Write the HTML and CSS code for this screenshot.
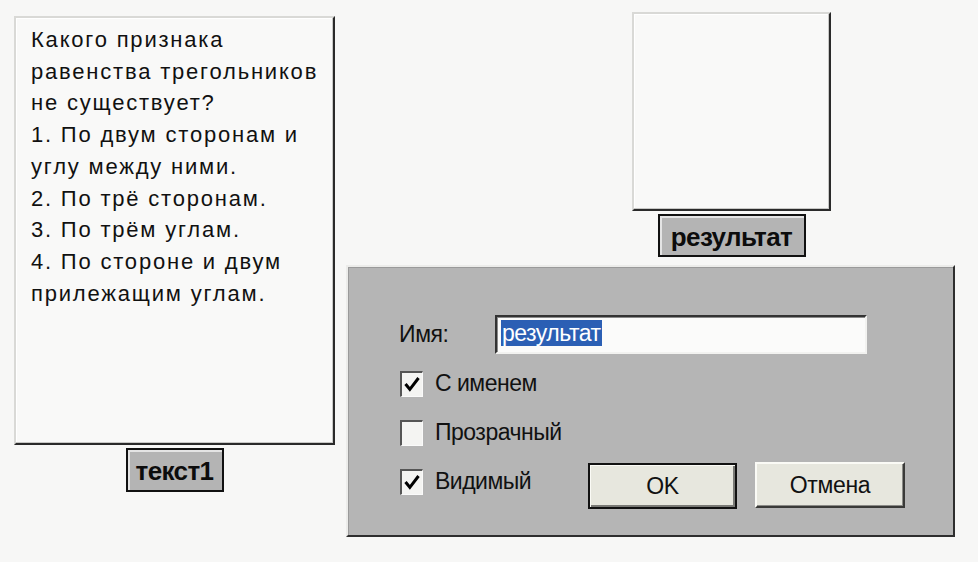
FILE: index.html
```html
<!DOCTYPE html>
<html lang="ru">
<head>
<meta charset="utf-8">
<title>Форма</title>
<link rel="stylesheet" href="styles.css">
</head>
<body>
<div class="page">
  <div class="left">
    <div class="memo">
      <p>Какого признака равенства трегольников не существует?</p>
      <p>1. По двум сторонам и углу между ними.</p>
      <p>2. По трё сторонам.</p>
      <p>3. По трём углам.</p>
      <p>4. По стороне и двум прилежащим углам.</p>
    </div>
    <div class="tag tag-text">текст1</div>
  </div>
  <div class="right">
    <div class="result-group">
      <div class="result-box"></div>
      <div class="tag tag-result">результат</div>
    </div>
    <div class="dialog">
      <div class="row-name">
        <span class="label">Имя:</span>
        <div class="input"><span class="sel">результат</span></div>
      </div>
      <div class="check-item ci-1">
        <span class="box"><svg viewBox="0 0 23 25" class="tick"><path d="M4 12 L9 18 L19 5" fill="none" stroke="#000" stroke-width="3.4"/></svg></span>
        <span class="clabel">С именем</span>
      </div>
      <div class="check-item ci-2">
        <span class="box"></span>
        <span class="clabel">Прозрачный</span>
      </div>
      <div class="row-last">
        <div class="check-item ci-3">
          <span class="box"><svg viewBox="0 0 23 25" class="tick"><path d="M4 12 L9 18 L19 5" fill="none" stroke="#000" stroke-width="3.4"/></svg></span>
          <span class="clabel">Видимый</span>
        </div>
        <div class="btn btn-ok">OK</div>
        <div class="btn btn-cancel">Отмена</div>
      </div>
    </div>
  </div>
</div>
</body>
</html>
```

FILE: styles.css
```css
html, body {
  margin: 0;
  padding: 0;
  background: #f7f7f6;
  width: 978px;
  height: 562px;
  overflow: hidden;
  font-family: "Liberation Sans", Arial, sans-serif;
  color: #111;
}
.page {
  display: flex;
  align-items: flex-start;
  padding: 12px 0 0 14px;
}
.left {
  margin-top: 4px;
  width: 321px;
  display: flex;
  flex-direction: column;
  align-items: center;
  gap: 3px;
}
.memo {
  box-sizing: border-box;
  width: 321px;
  height: 429px;
  background: #f9f9f8;
  border-top: 2px solid #d9d9d6;
  border-left: 2px solid #d9d9d6;
  border-right: 2px solid #2a2a2a;
  border-bottom: 2px solid #2a2a2a;
  box-shadow: inset -1px -1px 0 #c8c8c6, inset 1px 1px 0 #ffffff;
  padding: 6px 2px 0 15px;
  font-size: 22px;
  line-height: 31.7px;
  letter-spacing: 1.8px;
  color: #111;
}
.memo p { margin: 0; }
.tag {
  box-sizing: border-box;
  background: #b4b4b4;
  border: 2px solid #111;
  box-shadow: inset 2px 2px 0 #e4e4e4;
  font-weight: bold;
  font-size: 26px;
  letter-spacing: -0.6px;
  color: #0c0c0c;
  display: flex;
  align-items: center;
  justify-content: center;
  padding-top: 3px;
}
.tag-text { width: 98px; height: 44px; }
.tag-result { width: 148px; height: 43px; }
.right {
  margin-left: 11px;
  width: 609px;
  display: flex;
  flex-direction: column;
}
.result-group {
  margin-left: 286px;
  display: flex;
  flex-direction: column;
  align-items: center;
  align-self: flex-start;
  gap: 3px;
}
.result-box {
  box-sizing: border-box;
  width: 199px;
  height: 199px;
  background: #f9f9f8;
  border-top: 2px solid #d9d9d6;
  border-left: 2px solid #d9d9d6;
  border-right: 2px solid #2a2a2a;
  border-bottom: 2px solid #2a2a2a;
  box-shadow: inset -1px -1px 0 #c8c8c6, inset 1px 1px 0 #ffffff;
}
.dialog {
  box-sizing: border-box;
  margin-top: 8px;
  width: 609px;
  height: 272px;
  background: #b5b5b5;
  border-top: 2px solid #ececea;
  border-left: 2px solid #ececea;
  border-right: 2px solid #2e2e2e;
  border-bottom: 2px solid #2e2e2e;
  box-shadow: inset 1px 1px 0 #9a9a9a;
  padding: 48px 0 0 52px;
  font-size: 23px;
  color: #111;
}
.row-name {
  display: flex;
  align-items: center;
}
.label {
  width: 96px;
  margin-left: -1px;
  letter-spacing: -0.4px;
}
.input {
  box-sizing: border-box;
  width: 372px;
  height: 39px;
  background: #fbfbfa;
  border-top: 2px solid #333;
  border-left: 2px solid #333;
  border-right: 2px solid #f2f2f0;
  border-bottom: 2px solid #f2f2f0;
  box-shadow: inset 1px 1px 0 #8a8a8a;
  padding: 3px 0 0 4px;
}
.sel {
  display: inline-block;
  background: #2b5fb4;
  color: #fff;
  height: 26px;
  line-height: 27px;
  padding: 0 1px;
  letter-spacing: -0.5px;
}
.check-item {
  display: flex;
  align-items: center;
  gap: 12px;
}
.ci-1 { margin-top: 16px; }
.ci-2 { margin-top: 22px; }
.row-last {
  margin-top: 17px;
  display: flex;
  align-items: flex-start;
}
.ci-3 { margin-top: 5px; width: 188px; }
.box {
  box-sizing: border-box;
  width: 23px;
  height: 26px;
  background: #f4f4f2;
  border-top: 2px solid #555;
  border-left: 2px solid #555;
  border-right: 1px solid #fafafa;
  border-bottom: 1px solid #fafafa;
  display: flex;
  align-items: center;
  justify-content: center;
}
.tick { width: 21px; height: 23px; }
.clabel { letter-spacing: -0.5px; }
.btn {
  box-sizing: border-box;
  height: 46px;
  background: #e7e7de;
  display: flex;
  align-items: center;
  justify-content: center;
  font-size: 23px;
  letter-spacing: -0.3px;
  color: #111;
}
.btn-ok {
  width: 149px;
  border: 2px solid #111;
  box-shadow: inset 1px 1px 0 #fbfbf6, inset -2px -2px 0 #7a7a76;
}
.btn-cancel {
  width: 150px;
  margin-left: 18px;
  margin-top: -1px;
  border-top: 2px solid #fbfbf6;
  border-left: 2px solid #fbfbf6;
  border-right: 2px solid #3a3a38;
  border-bottom: 2px solid #3a3a38;
  box-shadow: inset -1px -1px 0 #8a8a86;
}
```
